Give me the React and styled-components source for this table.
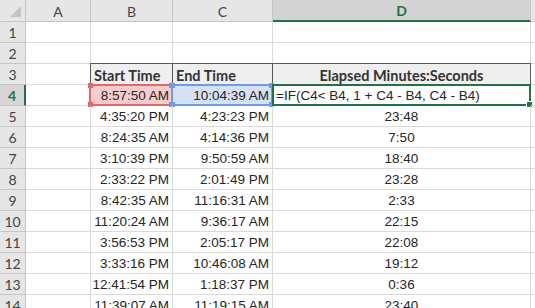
import React from 'react'
import styled, { createGlobalStyle, css } from 'styled-components'

const GlobalStyle = createGlobalStyle`
  html, body {
    margin: 0;
    padding: 0;
    background: #ffffff;
    overflow: hidden;
  }
`

const GREEN = '#217346'

const Sheet = styled.div`
  display: grid;
  grid-template-columns: 26px 65px 82px 100px 258px 1fr;
  grid-template-rows: 22px;
  grid-auto-rows: 21px;
  width: 535px;
  height: 308px;
  overflow: hidden;
  font-family: 'Liberation Sans', Arial, sans-serif;
  font-size: 13.5px;
  color: #262626;
`

const Corner = styled.div`
  position: relative;
  background: #e6e6e6;
  border-right: 1px solid #c6c6c6;
  border-bottom: 1px solid #c6c6c6;
  box-sizing: border-box;

  &::after {
    content: '';
    position: absolute;
    right: 4px;
    bottom: 4px;
    width: 0;
    height: 0;
    border-left: 11px solid transparent;
    border-bottom: 11px solid #c4c4c4;
  }
`

const ColHead = styled.div`
  display: flex;
  align-items: center;
  justify-content: center;
  box-sizing: border-box;
  background: ${p => (p.$active ? '#d3d3d3' : '#e6e6e6')};
  border-right: 1px solid #c6c6c6;
  border-bottom: ${p => (p.$active ? `2px solid ${GREEN}` : '1px solid #c6c6c6')};
  font-family: Lato, 'Open Sans', sans-serif;
  font-size: 14px;
  font-weight: ${p => (p.$active ? 700 : 400)};
  color: ${p => (p.$active ? GREEN : '#444444')};
  padding-top: 1px;
`

const RowHead = styled.div`
  display: flex;
  align-items: center;
  justify-content: center;
  box-sizing: border-box;
  background: ${p => (p.$active ? '#d6d6d6' : '#e6e6e6')};
  border-right: ${p => (p.$active ? `2px solid ${GREEN}` : '1px solid #c6c6c6')};
  border-bottom: 1px solid #c6c6c6;
  font-family: Lato, 'Open Sans', sans-serif;
  font-size: 14px;
  font-weight: ${p => (p.$active ? 700 : 400)};
  color: ${p => (p.$active ? GREEN : '#444444')};
`

const Cell = styled.div`
  position: relative;
  display: flex;
  align-items: center;
  box-sizing: border-box;
  border-right: 1px solid #dadada;
  border-bottom: 1px solid #dadada;
  padding: 0 3px;
  white-space: nowrap;
  justify-content: ${p =>
    p.$align === 'right' ? 'flex-end' : p.$align === 'center' ? 'center' : 'flex-start'};

  ${p =>
    p.$title &&
    css`
      background: #efefef;
      border: 1px solid #595959;
      margin-left: -1px;
      margin-top: -1px;
      font-family: Lato, 'Open Sans', sans-serif;
      font-size: 14.5px;
      font-weight: 700;
      color: #333333;
      padding-top: 2px;
    `}
`

/* formula reference outline drawn over a cell */
const RangeMark = styled.div`
  position: absolute;
  inset: -1px -1px -1px -2px;
  border: 2px solid ${p => p.$line};
  background: ${p => p.$fill};
  z-index: 0;
`

const Knob = styled.span`
  position: absolute;
  width: 5px;
  height: 5px;
  background: ${p => p.$line};
  ${p => (p.$top ? 'top: -3px;' : 'bottom: -3px;')}
  ${p => (p.$left ? 'left: -3px;' : 'right: -3px;')}
`

const ActiveMark = styled.div`
  position: absolute;
  inset: -1px -1px -1px -1px;
  border: 2px solid ${GREEN};
  z-index: 0;

  &::after {
    content: '';
    position: absolute;
    right: -4px;
    bottom: -4px;
    width: 5px;
    height: 5px;
    background: ${GREEN};
    border: 1px solid #ffffff;
  }
`

const Value = styled.span`
  position: relative;
  z-index: 1;
`

const Range = ({ line, fill }) => (
  <RangeMark $line={line} $fill={fill}>
    <Knob $line={line} $top $left />
    <Knob $line={line} $top />
    <Knob $line={line} $left />
    <Knob $line={line} />
  </RangeMark>
)

const times = [
  ['4:35:20 PM', '4:23:23 PM', '23:48'],
  ['8:24:35 AM', '4:14:36 PM', '7:50'],
  ['3:10:39 PM', '9:50:59 AM', '18:40'],
  ['2:33:22 PM', '2:01:49 PM', '23:28'],
  ['8:42:35 AM', '11:16:31 AM', '2:33'],
  ['11:20:24 AM', '9:36:17 AM', '22:15'],
  ['3:56:53 PM', '2:05:17 PM', '22:08'],
  ['3:33:16 PM', '10:46:08 AM', '19:12'],
  ['12:41:54 PM', '1:18:37 PM', '0:36'],
  ['11:39:07 AM', '11:19:15 AM', '23:40'],
]

const App = () => {
  return (
    <>
      <GlobalStyle />
      <Sheet>
        <Corner />
        <ColHead>A</ColHead>
        <ColHead>B</ColHead>
        <ColHead>C</ColHead>
        <ColHead $active>D</ColHead>
        <ColHead />

        {[1, 2].map(n => (
          <React.Fragment key={n}>
            <RowHead>{n}</RowHead>
            <Cell />
            <Cell />
            <Cell />
            <Cell />
            <Cell />
          </React.Fragment>
        ))}

        <RowHead>3</RowHead>
        <Cell />
        <Cell $title>Start Time</Cell>
        <Cell $title>End Time</Cell>
        <Cell $title $align="center">Elapsed Minutes:Seconds</Cell>
        <Cell />

        <RowHead $active>4</RowHead>
        <Cell />
        <Cell $align="right">
          <Range line="#e06a6a" fill="#f8cbcc" />
          <Value>8:57:50 AM</Value>
        </Cell>
        <Cell $align="right">
          <Range line="#6f9ce6" fill="#d6e1f4" />
          <Value>10:04:39 AM</Value>
        </Cell>
        <Cell>
          <ActiveMark />
          <Value>=IF(C4&lt; B4, 1 + C4 - B4, C4 - B4)</Value>
        </Cell>
        <Cell />

        {times.map((t, i) => (
          <React.Fragment key={i}>
            <RowHead>{i + 5}</RowHead>
            <Cell />
            <Cell $align="right">{t[0]}</Cell>
            <Cell $align="right">{t[1]}</Cell>
            <Cell $align="center">{t[2]}</Cell>
            <Cell />
          </React.Fragment>
        ))}
      </Sheet>
    </>
  )
}

export default App
